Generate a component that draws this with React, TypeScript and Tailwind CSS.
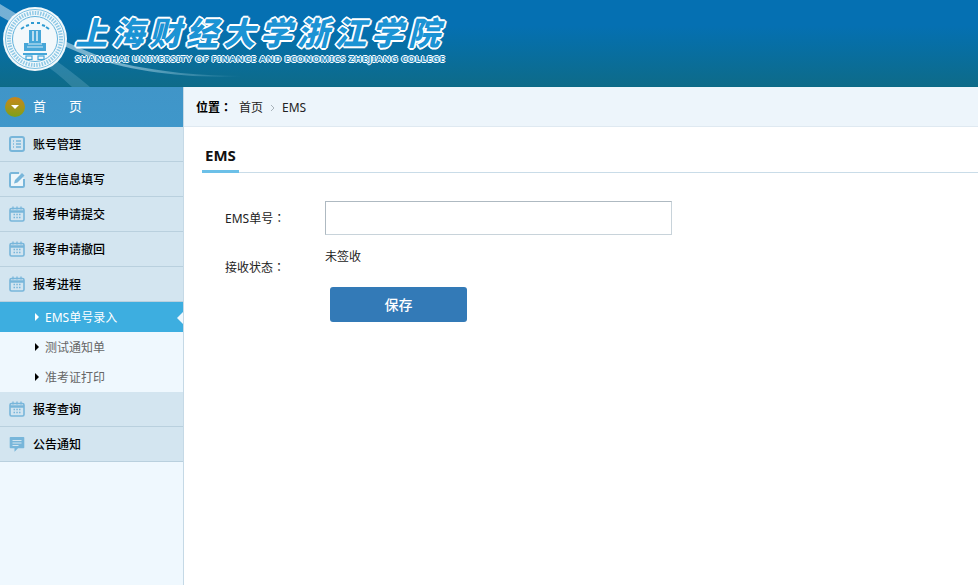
const font = "font-['Noto_Sans','Noto_Sans_CJK_SC',sans-serif]";

function Colon() {
  return <span className="font-['Noto_Sans_CJK_TC',sans-serif]">：</span>;
}

function ListIcon() {
  return (
    <svg width="16" height="16" viewBox="0 0 16 16" fill="none">
      <rect x="1" y="1" width="14" height="14" rx="2" stroke="#78b6da" strokeWidth="2" />
      <path d="M4 5h1M7 5h5M4 8h1M7 8h5M4 11h1M7 11h5" stroke="#78b6da" strokeWidth="1.4" />
    </svg>
  );
}

function EditIcon() {
  return (
    <svg width="17" height="17" viewBox="0 0 17 17" fill="none">
      <path d="M10 2H2.500A1.500 1.500 0 0 0 1 3.500V14.500A1.500 1.500 0 0 0 2.500 16H13.500A1.500 1.500 0 0 0 15 14.500V8" fill="#edf6fb" stroke="#78b6da" strokeWidth="2" />
      <path d="M5 12.500l1-3.500 7-7 2.500 2.500-7 7z" fill="#78b6da" />
    </svg>
  );
}

function CalendarIcon() {
  return (
    <svg width="16" height="16" viewBox="0 0 16 16" fill="none">
      <rect x="1" y="2.500" width="14" height="12.500" rx="1.500" fill="#d3e5f0" stroke="#78b6da" strokeWidth="1.600" />
      <path d="M1 5.500h14" stroke="#78b6da" strokeWidth="2.500" />
      <path d="M4 .500v3M8 .500v3M12 .500v3" stroke="#78b6da" strokeWidth="1.300" />
      <path d="M4.500 8.500h1.500M7.300 8.500h1.500M10 8.500h1.500M4.500 11.500h1.500M7.300 11.500h1.500M10 11.500h1.500" stroke="#78b6da" strokeWidth="1.400" />
    </svg>
  );
}

function ChatIcon() {
  return (
    <svg width="16" height="17" viewBox="0 0 16 17" fill="none">
      <path d="M1.500 1h13a.800.800 0 0 1 .800.800V11.500a.800.800 0 0 1-.800.800H9l-3.500 3.500V12.300H1.500a.800.800 0 0 1-.800-.800V1.800A.800.800 0 0 1 1.500 1z" fill="#78b6da" />
      <path d="M3.500 4.500h9M3.500 7h9M3.500 9.500h6" stroke="#d3e5f0" strokeWidth="1.200" />
    </svg>
  );
}

function Seal() {
  return (
    <svg width="66" height="66" viewBox="0 0 66 66" fill="none">
      <circle cx="33" cy="33" r="32" fill="#f2f8fb" />
      <circle cx="33" cy="33" r="29.500" stroke="#7cc0e2" strokeWidth="1" />
      <circle cx="33" cy="33" r="26" stroke="#8fc9e6" strokeWidth="4" strokeDasharray="1.500 1.200" />
      <circle cx="33" cy="33" r="22.500" stroke="#5fb2dc" strokeWidth="1" />
      <path d="M19 23l3-2M24 20l3-1M29 17h3M35 17h3M40 19l3 1M44 21l3 2" stroke="#2f9bd2" strokeWidth="2" />
      <path d="M27 24h12v13h5v8H22v-8h5z" fill="#45a6d8" />
      <path d="M31 25v10M35 25v10" stroke="#eef7fb" strokeWidth="1.400" />
      <path d="M26 38h14M25 41h16" stroke="#d5ecf7" strokeWidth="1" />
      <path d="M21 47h24v2H21z" fill="#45a6d8" />
      <rect x="24" y="50" width="6" height="3.500" stroke="#45a6d8" strokeWidth="1.200" />
      <rect x="36" y="50" width="6" height="3.500" stroke="#45a6d8" strokeWidth="1.200" />
    </svg>
  );
}

function Swoosh() {
  return (
    <svg className="absolute inset-0" width="978" height="87" viewBox="0 0 978 87" fill="none">
      <defs>
        <linearGradient id="sw" x1="0" y1="0" x2="1" y2="0">
          <stop offset="0" stopColor="#ffffff" stopOpacity="0.45" />
          <stop offset="0.5" stopColor="#cdeaf6" stopOpacity="0.55" />
          <stop offset="1" stopColor="#bfe6f5" stopOpacity="0" />
        </linearGradient>
      </defs>
      <path d="M0 4C30 22 70 48 120 63C160 72 200 76 245 76C190 79 130 72 85 55C50 40 20 28 0 16z" fill="url(#sw)" />
      <path d="M52 58C66 67 78 77 90 87H72C62 77 50 68 38 60z" fill="#9fd3e6" fillOpacity="0.22" />
    </svg>
  );
}

function NavRow({ icon, label }: { icon: React.ReactNode; label: string }) {
  return (
    <div className="flex h-[35px] items-center border-b border-[#b9d0de] bg-[#d3e5f0]">
      <div className="flex w-[33px] justify-center pl-[1px]">{icon}</div>
      <span className="pt-[2px] text-[12px] font-medium text-black">{label}</span>
    </div>
  );
}

function SubRow({ label, active }: { label: string; active?: boolean }) {
  return (
    <div className={`relative flex h-[30px] items-center pl-[35px] text-[12px] ${active ? "bg-[#3daee0] text-white" : "text-[#666]"}`}>
      <span className={`mr-[6px] h-0 w-0 border-y-[4px] border-l-[4px] border-y-transparent ${active ? "border-l-white" : "border-l-black"}`} />
      <span className="pt-[2px]">{label}</span>
      {active && (
        <span className="absolute right-0 top-[10px] h-0 w-0 border-y-[6px] border-r-[6px] border-y-transparent border-r-[#eff8fe]" />
      )}
    </div>
  );
}

export default function App() {
  return (
    <div className={`${font} flex h-[585px] w-[978px] flex-col overflow-hidden bg-white`}>
      <header className="relative flex h-[87px] shrink-0 border-b border-[#0b6a86] bg-gradient-to-b from-[#0570b2] from-30% to-[#0e6b89]">
        <Swoosh />
        <div className="relative ml-[2px] mt-[6px]">
          <Seal />
        </div>
        <div className="relative ml-[7px] mt-[14px] w-[376px]">
          <div className="h-[38px] whitespace-nowrap text-[32px] font-black italic leading-[38px] tracking-[5px] text-[#1b93d4] [text-shadow:-2px_0_0_#fff,2px_0_0_#fff,0_-2px_0_#fff,0_2px_0_#fff,-1px_-1px_0_#fff,1px_1px_0_#fff,1px_-1px_0_#fff,-1px_1px_0_#fff]">
            上海财经大学浙江学院
          </div>
          <div className="h-[13px] whitespace-nowrap text-[9.500px] font-bold leading-[13px] tracking-[0.370px] text-[#2a8fc4] [text-shadow:-1px_0_0_#fff,1px_0_0_#fff,0_-1px_0_#fff,0_1px_0_#fff]">
            SHANGHAI UNIVERSITY OF FINANCE AND ECONOMICS ZHEJIANG COLLEGE
          </div>
        </div>
      </header>

      <div className="flex min-h-0 flex-1">
        <aside className="w-[184px] shrink-0 border-r border-[#c5d9e6] bg-[#eff8fe]">
          <div className="flex h-[40px] items-center bg-gradient-to-b from-[#4095c8] to-[#3f97ca] pl-[5px] text-[13px] text-white">
            <span className="flex h-[20px] w-[20px] items-center justify-center rounded-full bg-gradient-to-b from-[#c8851c] to-[#7ba01a]">
              <span className="h-0 w-0 border-x-[4px] border-t-[4px] border-x-transparent border-t-white" />
            </span>
            <span className="ml-[8px]">首</span>
            <span className="ml-[23px]">页</span>
          </div>
          <NavRow icon={<ListIcon />} label="账号管理" />
          <NavRow icon={<EditIcon />} label="考生信息填写" />
          <NavRow icon={<CalendarIcon />} label="报考申请提交" />
          <NavRow icon={<CalendarIcon />} label="报考申请撤回" />
          <NavRow icon={<CalendarIcon />} label="报考进程" />
          <SubRow label="EMS单号录入" active />
          <SubRow label="测试通知单" />
          <SubRow label="准考证打印" />
          <NavRow icon={<CalendarIcon />} label="报考查询" />
          <NavRow icon={<ChatIcon />} label="公告通知" />
        </aside>

        <main className="min-w-0 flex-1">
          <div className="flex h-[40px] items-center border-b border-[#dfe9f1] bg-[#edf5fb] pl-[12px] pt-[2px] text-[12px] text-[#222]">
            <span className="font-bold text-black">位置<Colon /></span>
            <span className="ml-[7px]">首页</span>
            <svg className="mx-[7px]" width="5" height="8" viewBox="0 0 5 8" fill="none">
              <path d="M1 1l3 3-3 3" stroke="#a9b3ba" strokeWidth="1" />
            </svg>
            <span>EMS</span>
          </div>

          <div className="ml-[18px] mt-[17px] h-[29px] border-b border-[#c9dce8]">
            <div className="h-[29px] w-[37px] border-b-[3px] border-[#6cc0e8] pl-[3px] text-[15px] font-bold leading-[22px] text-[#111]">
              EMS
            </div>
          </div>

          <div className="ml-[41px] mt-[28px] text-[12px] text-[#222]">
            <div className="flex items-center">
              <label className="w-[100px]">EMS单号<Colon /></label>
              <input className="h-[34px] w-[347px] border border-[#c8d3da] border-t-[#aeb9c1] border-l-[#aeb9c1] bg-white" />
            </div>
            <div className="mt-[13px] flex">
              <label className="mt-[10px] w-[100px]">接收状态<Colon /></label>
              <span className="text-[#222]">未签收</span>
            </div>
            <button className="ml-[105px] mt-[10px] block h-[35px] w-[137px] rounded-[3px] bg-[#337ab7] text-[14px] font-medium text-white">
              保存
            </button>
          </div>
        </main>
      </div>
    </div>
  );
}
